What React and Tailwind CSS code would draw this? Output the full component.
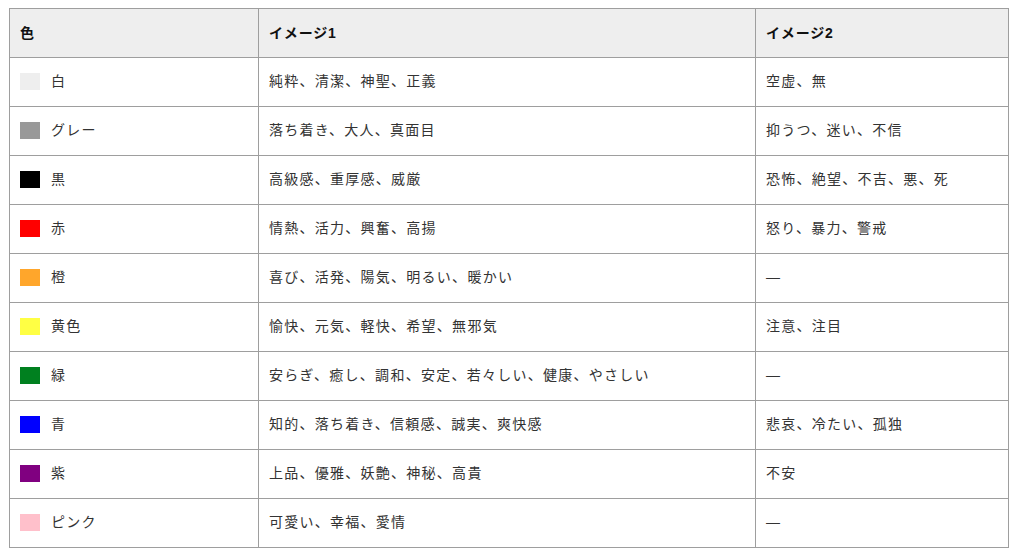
const rows = [
  { color: "#eeeeee", name: "白", image1: "純粋、清潔、神聖、正義", image2: "空虚、無" },
  { color: "#999999", name: "グレー", image1: "落ち着き、大人、真面目", image2: "抑うつ、迷い、不信" },
  { color: "#000000", name: "黒", image1: "高級感、重厚感、威厳", image2: "恐怖、絶望、不吉、悪、死" },
  { color: "#ff0000", name: "赤", image1: "情熱、活力、興奮、高揚", image2: "怒り、暴力、警戒" },
  { color: "#ffa62b", name: "橙", image1: "喜び、活発、陽気、明るい、暖かい", image2: "—" },
  { color: "#ffff44", name: "黄色", image1: "愉快、元気、軽快、希望、無邪気", image2: "注意、注目" },
  { color: "#00801f", name: "緑", image1: "安らぎ、癒し、調和、安定、若々しい、健康、やさしい", image2: "—" },
  { color: "#0000ff", name: "青", image1: "知的、落ち着き、信頼感、誠実、爽快感", image2: "悲哀、冷たい、孤独" },
  { color: "#800080", name: "紫", image1: "上品、優雅、妖艶、神秘、高貴", image2: "不安" },
  { color: "#ffc0cb", name: "ピンク", image1: "可愛い、幸福、愛情", image2: "—" },
];

const cell =
  "bg-white flex items-center px-[10px] pb-px text-[#333] tracking-[0.09em] [font-feature-settings:'pkna']";
const head = "bg-[#eeeeee] flex items-center px-[10px] font-bold text-[#111] tracking-[0.06em]";

const App = () => {
  return (
    <div
      className="pt-[8px] pl-[9px] text-[14px]"
      style={{ fontFamily: '"Liberation Sans", Arial, "Noto Sans CJK JP", sans-serif' }}
    >
      <div className="w-[1000px] grid grid-cols-[248px_496px_252px] auto-rows-[48px] gap-px p-px bg-[#9e9e9e]">
        <div className={head}>色</div>
        <div className={head}>イメージ1</div>
        <div className={head}>イメージ2</div>
        {rows.map((r) => (
          <>
            <div key={r.name + "a"} className={cell + " gap-[11px]"}>
              <span className="w-[20px] h-[17px] shrink-0" style={{ backgroundColor: r.color }} />
              <span>{r.name}</span>
            </div>
            <div key={r.name + "b"} className={cell}>
              {r.image1}
            </div>
            <div key={r.name + "c"} className={cell}>
              {r.image2}
            </div>
          </>
        ))}
      </div>
    </div>
  );
};

export default App;
